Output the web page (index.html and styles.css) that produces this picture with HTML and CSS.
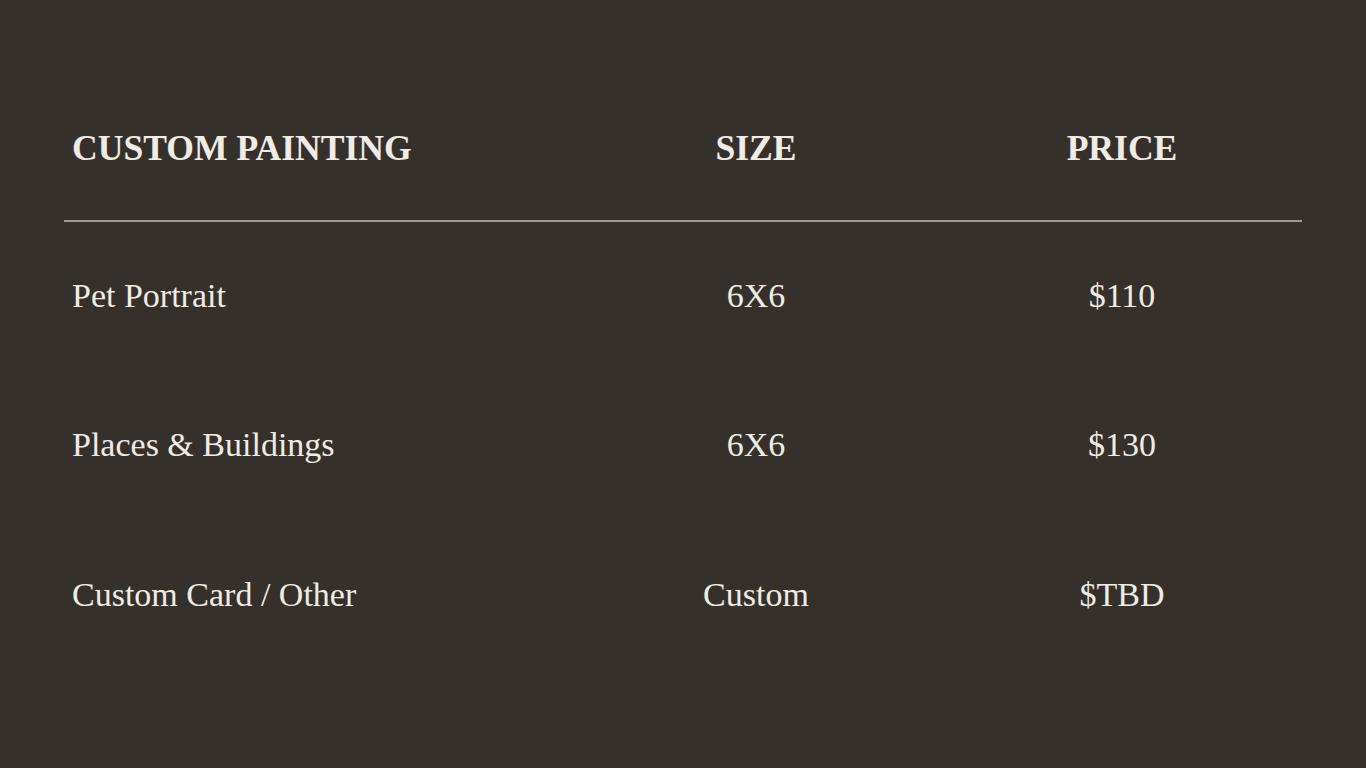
FILE: index.html
```html
<!DOCTYPE html>
<html lang="en">
<head>
<meta charset="utf-8">
<title>Custom Painting Prices</title>
<link rel="stylesheet" href="styles.css">
</head>
<body>
<main class="page">
  <div class="table">
    <div class="row head">
      <div class="cell first">CUSTOM PAINTING</div>
      <div class="cell">SIZE</div>
      <div class="cell">PRICE</div>
    </div>
    <div class="row">
      <div class="cell first">Pet Portrait</div>
      <div class="cell">6X6</div>
      <div class="cell">$110</div>
    </div>
    <div class="row">
      <div class="cell first">Places &amp; Buildings</div>
      <div class="cell">6X6</div>
      <div class="cell">$130</div>
    </div>
    <div class="row">
      <div class="cell first">Custom Card / Other</div>
      <div class="cell">Custom</div>
      <div class="cell">$TBD</div>
    </div>
  </div>
</main>
</body>
</html>
```

FILE: styles.css
```css
html, body {
  margin: 0;
  padding: 0;
  background: #35302b;
}
body {
  width: 1366px;
  height: 768px;
  overflow: hidden;
  color: #f0ebe3;
  font-family: "Liberation Serif", "DejaVu Serif", serif;
}
.page {
  padding: 76px 64px 0;
}
.table {
  display: flex;
  flex-direction: column;
}
.row {
  display: grid;
  grid-template-columns: 506px 372px 360px;
  height: 149.5px;
  padding-bottom: 2px;
  box-sizing: border-box;
  align-items: center;
  font-size: 34px;
}
.row.head {
  height: 146px;
  padding-bottom: 0;
  border-bottom: 2px solid #9f9a94;
  font-size: 35.6px;
  font-weight: 700;
  letter-spacing: 0;
}
.cell {
  text-align: center;
}
.cell.first {
  text-align: left;
  padding-left: 8px;
}
```
